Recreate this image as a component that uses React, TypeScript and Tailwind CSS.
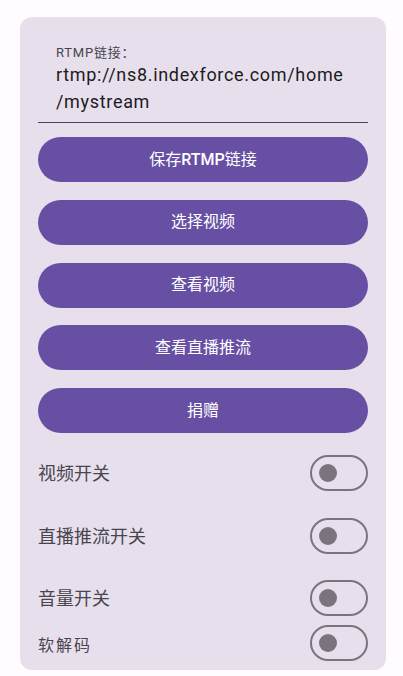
const font = "font-['Roboto','Noto_Sans_CJK_SC',sans-serif]";

const buttons = [
  <>
    保存<span className="font-medium">RTMP</span>链接
  </>,
  '选择视频',
  '查看视频',
  '查看直播推流',
  '捐赠',
];

function Switch() {
  return (
    <div className="flex h-[36px] w-[58px] shrink-0 items-center rounded-full border-2 border-[#79747e] pl-[7px]">
      <div className="h-[18px] w-[18px] rounded-full bg-[#79747e]" />
    </div>
  );
}

function ToggleRow({ label, className, textClass }: { label: string; className: string; textClass: string }) {
  return (
    <div className={`flex h-[36px] items-center justify-between ${className}`}>
      <span className={`text-[#49454f] ${textClass}`}>{label}</span>
      <Switch />
    </div>
  );
}

export default function App() {
  return (
    <div className={`min-h-screen bg-[#fffbfe] pl-[20px] pr-[17px] pt-[17px] ${font}`}>
      <div className="flex h-[653px] flex-col rounded-xl bg-[#e7e0ec] px-[18px]">
        {/* RTMP text field */}
        <div className="border-b border-[#49454f] px-[18px] pt-[28px] pb-[7px]">
          <div className="text-[13px] leading-[16px] tracking-[0.8px] text-[#49454f]">RTMP链接：</div>
          <div className="text-[18px] leading-[27px] tracking-[0.68px] text-[#1c1b1f]">
            <div>rtmp://ns8.indexforce.com/home</div>
            <div>/mystream</div>
          </div>
        </div>

        <div className="mt-[14px] flex flex-col gap-[17.75px]">
          {buttons.map((b, i) => (
            <button
              key={i}
              className="flex h-[45px] items-center justify-center rounded-full bg-[#6750a4] text-[16px] font-normal text-white"
            >
              {b}
            </button>
          ))}
        </div>

        <ToggleRow label="视频开关" className="mt-[22px]" textClass="text-[18px]" />
        <ToggleRow label="直播推流开关" className="mt-[27px]" textClass="text-[18px]" />
        <ToggleRow label="音量开关" className="mt-[26px]" textClass="text-[18px]" />
        <ToggleRow label="软解码" className="mt-[9px]" textClass="pt-[5px] text-[16px] tracking-[2px]" />
      </div>
    </div>
  );
}
